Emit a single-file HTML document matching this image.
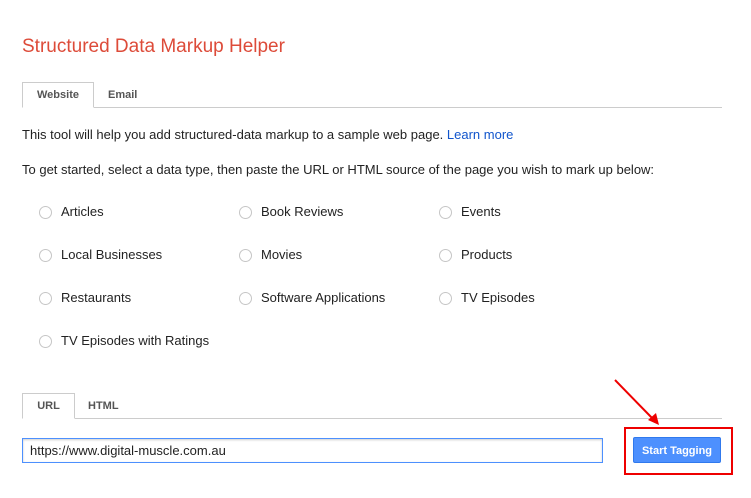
<!DOCTYPE html>
<html><head><style>
body{margin:0;width:751px;height:498px;background:#fff;font-family:"Liberation Sans",Arial,sans-serif;position:relative;overflow:hidden;color:#222}
.a{position:absolute}
h1{position:absolute;left:22px;top:36px;margin:0;font-weight:normal;font-size:19px;color:#dd4b39}
.tabline{position:absolute;height:1px;background:#ccc}
.tab{position:absolute;border:1px solid #ccc;border-bottom:1px solid #fff;background:#fff;font-size:11px;font-weight:bold;color:#555;text-align:center;box-sizing:border-box}
.tab2{position:absolute;font-size:11px;font-weight:bold;color:#555}
.t{position:absolute;font-size:13px;white-space:nowrap}
.r{position:absolute;width:13px;height:13px;border:1px solid #c6c6c6;border-radius:50%;box-sizing:border-box}
</style></head><body>
<h1>Structured Data Markup Helper</h1>
<div class="tabline" style="left:22px;top:107px;width:700px"></div>
<div class="tab" style="left:22px;top:82px;width:72px;height:26px;line-height:24px">Website</div>
<div class="tab2" style="left:108px;top:89px">Email</div>
<div class="t" style="left:22px;top:127px">This tool will help you add structured-data markup to a sample web page. <span style="color:#15c">Learn more</span></div>
<div class="t" style="left:22px;top:162px">To get started, select a data type, then paste the URL or HTML source of the page you wish to mark up below:</div>

<div class="r" style="left:39px;top:206px"></div><div class="t" style="left:61px;top:204px">Articles</div>
<div class="r" style="left:239px;top:206px"></div><div class="t" style="left:261px;top:204px">Book Reviews</div>
<div class="r" style="left:439px;top:206px"></div><div class="t" style="left:461px;top:204px">Events</div>
<div class="r" style="left:39px;top:249px"></div><div class="t" style="left:61px;top:247px">Local Businesses</div>
<div class="r" style="left:239px;top:249px"></div><div class="t" style="left:261px;top:247px">Movies</div>
<div class="r" style="left:439px;top:249px"></div><div class="t" style="left:461px;top:247px">Products</div>
<div class="r" style="left:39px;top:292px"></div><div class="t" style="left:61px;top:290px">Restaurants</div>
<div class="r" style="left:239px;top:292px"></div><div class="t" style="left:261px;top:290px">Software Applications</div>
<div class="r" style="left:439px;top:292px"></div><div class="t" style="left:461px;top:290px">TV Episodes</div>
<div class="r" style="left:39px;top:335px"></div><div class="t" style="left:61px;top:333px">TV Episodes with Ratings</div>

<div class="tabline" style="left:22px;top:418px;width:700px"></div>
<div class="tab" style="left:22px;top:393px;width:53px;height:26px;line-height:24px">URL</div>
<div class="tab2" style="left:88px;top:400px">HTML</div>

<div class="a" style="left:22px;top:438px;width:581px;height:25px;border:1px solid #4d90fe;box-sizing:border-box;box-shadow:inset 0 1px 2px rgba(0,0,0,.2)"></div>
<div class="t" style="left:30px;top:443px;font-size:13px">https://www.digital-muscle.com.au</div>
<div class="a" style="left:633px;top:437px;width:88px;height:26px;background:#4d90fe;border:1px solid #3079ed;box-sizing:border-box;border-radius:2px;color:#fff;font-size:11px;font-weight:bold;text-align:center;line-height:27px">Start Tagging</div>
<div class="a" style="left:624px;top:427px;width:109px;height:48px;border:2px solid #e00;box-sizing:border-box"></div>
<svg class="a" style="left:600px;top:370px" width="70" height="60"><line x1="15" y1="10" x2="54" y2="50" stroke="#e00" stroke-width="2"/><polygon points="59,55 48,50 56,43" fill="#e00"/></svg>
</body></html>
